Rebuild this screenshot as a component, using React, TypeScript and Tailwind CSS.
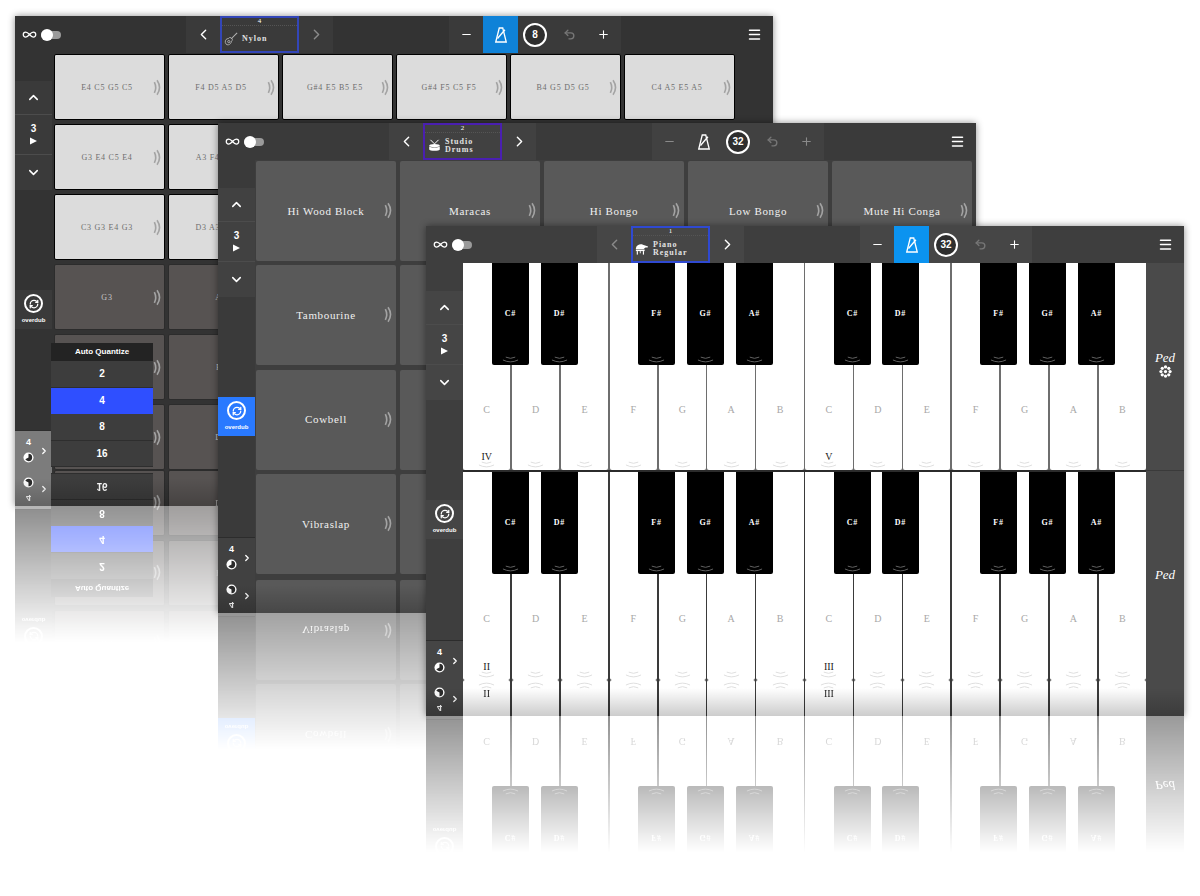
import { ReactNode } from 'react';
import { ChevronDown, ChevronLeft, ChevronRight, ChevronUp, Infinity as InfinityIcon, Menu, Minus, Plus, RefreshCw, Undo2 } from 'lucide-react';

interface Theme {
    bar: string;
    group: string;
    side: string;
    cell: string;
    main: string;
    box: string;
}

const darkTheme: Theme = { bar: 'bg-[#333333]', group: 'bg-[#3a3a3a]', side: 'bg-[#333333]', cell: 'bg-[#3a3a3a]', main: 'bg-[#333333]', box: 'border-[#3346b8]' };
const midTheme: Theme = { bar: 'bg-[#3a3a3a]', group: 'bg-[#414141]', side: 'bg-[#3a3a3a]', cell: 'bg-[#414141]', main: 'bg-[#3e3e3e]', box: 'border-[#4a1fb0]' };
const lightTheme: Theme = { bar: 'bg-[#3e3e3e]', group: 'bg-[#464646]', side: 'bg-[#3e3e3e]', cell: 'bg-[#454545]', main: 'bg-[#4a4a4a]', box: 'border-[#2f49d1]' };

interface FrameProps {
    theme: Theme;
    number: number;
    name: string[];
    icon: ReactNode;
    bpm: number;
    leftDim?: boolean;
    rightDim?: boolean;
    stepDim?: boolean;
    metronomeOn?: boolean;
    metronomeColor?: string;
    overdubOn?: boolean;
    modeLit?: boolean;
    children: ReactNode;
}

function GuitarIcon() {
    return (
        <svg viewBox="0 0 16 16" className="w-[14px] h-[14px]" fill="none" stroke="#b5b5b5" strokeWidth="1">
            <path d="M15 1 L8 8" strokeWidth="1.2" />
            <path d="M8 6.5 C6.5 6 5.5 6.5 5 7.5 C3 7.5 1 9 1.5 12 C2 14.5 4.5 15.5 6.5 14 C8 13 8.5 11.5 8.5 10.5 C9.5 10 10 9 9.5 8 Z" />
            <circle cx="5.5" cy="11" r="1.3" />
        </svg>
    );
}

function DrumIcon() {
    return (
        <svg viewBox="0 0 16 16" className="w-[13px] h-[13px]">
            <path d="M3 1 L8 6 L13 1" fill="none" stroke="#ffffff" strokeWidth="1.2" />
            <ellipse cx="8" cy="8" rx="6.5" ry="2" fill="#ffffff" />
            <path d="M1.5 9 V13 C1.5 15 14.5 15 14.5 13 V9 C14 11 2 11 1.5 9 Z" fill="#ffffff" />
        </svg>
    );
}

function PianoIcon() {
    return (
        <svg viewBox="0 0 16 16" className="w-[14px] h-[14px]" fill="#ffffff">
            <path d="M1 7 C2 3 6 2 9 3 L15 5 L14 6.5 C12 6 11 7 10 8 H1 Z" />
            <rect x="1" y="8.6" width="10" height="1.8" />
            <rect x="2" y="10.4" width="1.3" height="4" />
            <rect x="9" y="10.4" width="1.3" height="4" />
            <rect x="5.5" y="10.4" width="1" height="2.5" />
        </svg>
    );
}

function MetronomeIcon() {
    return (
        <svg viewBox="0 0 16 18" className="w-[14px] h-[16px]" fill="none" stroke="#ffffff" strokeWidth="1.5">
            <path d="M2 17 L6 1 H10 L14 17 Z" />
            <path d="M4 13 L12.5 3" />
        </svg>
    );
}

function SoundIcon() {
    return (
        <svg viewBox="0 0 10 18" className="w-[9px] h-[17px]" fill="none" stroke="#a3a3a3" strokeWidth="1.8">
            <path d="M1.5 3 Q4.5 9 1.5 15" />
            <path d="M4.5 1 Q10 9 4.5 17" />
        </svg>
    );
}

function ModeIcon() {
    return (
        <svg viewBox="0 0 12 12" className="w-[11px] h-[11px]">
            <circle cx="6" cy="6" r="5.5" fill="#ffffff" />
            <path d="M6 2 A4 4 0 0 1 6 10 A4 4 0 0 1 2.5 8 L6 6 Z" fill="#2b2b2b" />
        </svg>
    );
}

function Frame({ theme, number, name, icon, bpm, leftDim, rightDim, stepDim, metronomeOn, metronomeColor, overdubOn, modeLit, children }: FrameProps) {
    return (
        <div className={`relative flex flex-col w-[758px] h-[454px] ${theme.main}`}>
            {/* Top bar */}
            <div className={`flex h-[37px] shrink-0 ${theme.bar}`}>
                <div className="flex items-center w-[171px] pl-[7px] gap-[4px]">
                    <InfinityIcon size={15} color="#ffffff" strokeWidth={2} />
                    <div className="relative w-[20px] h-[8px] rounded-full bg-[#9a9a9a]">
                        <div className="absolute left-0 top-[-2px] w-[12px] h-[12px] rounded-full bg-white" />
                    </div>
                </div>
                <div className={`flex w-[147px] ${theme.group}`}>
                    <div className="flex items-center justify-center w-[34px]">
                        <ChevronLeft size={17} strokeWidth={2} color={leftDim ? '#8a8a8a' : '#ffffff'} />
                    </div>
                    <div className={`flex flex-col w-[79px] border-2 ${theme.box}`}>
                        <div className="h-[8px] border-b border-dotted border-[#555555] text-[7px] leading-[7px] text-center text-white">{number}</div>
                        <div className="flex flex-1 items-center pl-[2px] gap-[4px]">
                            <div className="flex justify-center w-[14px]">{icon}</div>
                            <div className="text-[8px] leading-[8px] font-bold tracking-[1px] text-[#e2e2e2]">
                                {name.map((line) => (
                                    <div key={line}>{line}</div>
                                ))}
                            </div>
                        </div>
                    </div>
                    <div className="flex items-center justify-center w-[34px]">
                        <ChevronRight size={17} strokeWidth={2} color={rightDim ? '#8a8a8a' : '#ffffff'} />
                    </div>
                </div>
                <div className="w-[116px]" />
                <div className={`flex w-[172px] ${theme.group}`}>
                    <div className="flex flex-1 items-center justify-center">
                        <Minus size={13} strokeWidth={2} color={stepDim ? '#8a8a8a' : '#ffffff'} />
                    </div>
                    <div className={`flex flex-1 items-center justify-center ${metronomeOn ? metronomeColor : ''}`}>
                        <MetronomeIcon />
                    </div>
                    <div className="flex flex-1 items-center justify-center">
                        <div className="flex items-center justify-center w-[24px] h-[24px] rounded-full border-2 border-white bg-[#2e2e2e] font-['Liberation_Sans',sans-serif] text-[10px] font-bold text-white">
                            {bpm}
                        </div>
                    </div>
                    <div className="flex flex-1 items-center justify-center">
                        <Undo2 size={13} strokeWidth={2.5} color="#777777" />
                    </div>
                    <div className="flex flex-1 items-center justify-center">
                        <Plus size={13} strokeWidth={2} color={stepDim ? '#8a8a8a' : '#ffffff'} />
                    </div>
                </div>
                <div className="flex-1" />
                <div className="flex items-center justify-center w-[37px]">
                    <Menu size={15} strokeWidth={2.4} color="#ffffff" />
                </div>
            </div>

            <div className="flex flex-1 min-h-0">
                {/* Left rail */}
                <div className={`flex flex-col w-[37px] shrink-0 font-['Liberation_Sans',sans-serif] text-white ${theme.side}`}>
                    <div className="h-[28px]" />
                    <div className={`flex flex-col h-[109px] ${theme.cell}`}>
                        <div className="flex items-center justify-center h-[34px] border-b border-[#4c4c4c]">
                            <ChevronUp size={15} strokeWidth={2.4} />
                        </div>
                        <div className="flex flex-col items-center justify-center h-[40px] border-b border-[#4c4c4c] gap-[3px]">
                            <span className="text-[10px] leading-[10px] font-bold">3</span>
                            <svg viewBox="0 0 8 8" className="w-[7px] h-[8px]" fill="#ffffff">
                                <path d="M0 0 L8 4 L0 8 Z" />
                            </svg>
                        </div>
                        <div className="flex flex-1 items-center justify-center">
                            <ChevronDown size={15} strokeWidth={2.4} />
                        </div>
                    </div>
                    <div className="h-[100px]" />
                    <div className={`flex flex-col items-center h-[39px] pt-[4px] ${overdubOn ? 'bg-[#2979ff]' : theme.cell}`}>
                        <div className="flex items-center justify-center w-[19px] h-[19px] rounded-full border-2 border-white">
                            <RefreshCw size={10} strokeWidth={3} />
                        </div>
                        <span className="mt-[3px] text-[6px] leading-[8px] font-bold">overdub</span>
                    </div>
                    <div className="flex-1" />
                    <div className={`flex items-center h-[40px] border-t border-[#2c2c2c] ${modeLit ? 'bg-[#7c7c7c]' : theme.cell}`}>
                        <div className="flex flex-col items-center w-[27px] gap-[5px]">
                            <span className="text-[9px] leading-[9px] font-bold">4</span>
                            <ModeIcon />
                        </div>
                        <ChevronRight size={10} strokeWidth={3} className="-ml-[3px]" />
                    </div>
                </div>

                <div className="flex-1 min-w-0">{children}</div>
            </div>
        </div>
    );
}

// Window with a mirrored copy fading out under it
function StudioWindow({ position, frame }: { position: string; frame: ReactNode }) {
    return (
        <section className={`absolute w-[758px] ${position}`}>
            <div className="absolute inset-x-0 top-0 h-[490px] shadow-[0_0_7px_rgba(0,0,0,0.45)]" />
            <div className="relative">{frame}</div>
            <div className="relative h-[180px] overflow-hidden bg-white" aria-hidden="true">
                <div className="h-[180px] overflow-hidden [mask-image:linear-gradient(to_bottom,#000_36px,rgba(0,0,0,0.56)_36px,rgba(0,0,0,0)_172px)]">
                    <div className="-scale-y-100">{frame}</div>
                </div>
                <div className="absolute inset-x-0 top-[8px] h-[28px] bg-gradient-to-b from-transparent to-black/20" />
            </div>
        </section>
    );
}

const padChords = [
    ['E4 C5 G5 C5', 'F4 D5 A5 D5', 'G#4 E5 B5 E5', 'G#4 F5 C5 F5', 'B4 G5 D5 G5', 'C4 A5 E5 A5'],
    ['G3 E4 C5 E4', 'A3 F4 D5 F4', '', '', '', ''],
    ['C3 G3 E4 G3', 'D3 A3 F4 A3', '', '', '', ''],
    ['G3', 'A3', '', '', '', ''],
    ['E3', 'F3', '', '', '', ''],
    ['C3', 'D3', '', '', '', ''],
];

function ChordGrid() {
    return (
        <div className="relative h-full pl-[2px] pt-px">
            <div className="grid grid-cols-[repeat(6,111px)] auto-rows-[66px] gap-x-[3px] gap-y-[4px]">
                {padChords.map((row, rowIdx) =>
                    row.map((chord, idx) => (
                        <div
                            key={`${rowIdx}-${idx}`}
                            className={
                                rowIdx < 3
                                    ? 'relative flex items-center justify-center rounded-[2px] border border-black bg-[#dcdcdc] text-[#6e6e6e]'
                                    : 'relative flex items-center justify-center rounded-[2px] border border-[#2c2c2c] bg-[#575352] text-[#c8c8c8]'
                            }
                        >
                            <span className="pt-px pr-[5px] text-[8px] tracking-[0.75px]">{chord}</span>
                            <div className="absolute right-[2px] top-[24px]">
                                <SoundIcon />
                            </div>
                        </div>
                    )),
                )}
            </div>
            {/* Auto Quantize popover */}
            <div className="absolute left-[-1px] top-[290px] w-[102px] font-['Liberation_Sans',sans-serif] font-bold text-white">
                <div className="flex items-center justify-center h-[18px] bg-[#232323] text-[8px]">Auto Quantize</div>
                {[2, 4, 8, 16].map((value) => (
                    <div
                        key={value}
                        className={
                            value === 4
                                ? 'flex items-center justify-center h-[26.5px] bg-[#2f4fff] text-[10px]'
                                : 'flex items-center justify-center h-[26.5px] border-b border-[#2e2e2e] bg-[#3d3d3d] text-[10px]'
                        }
                    >
                        {value}
                    </div>
                ))}
            </div>
        </div>
    );
}

const drumPads = [
    ['Hi Wood Block', 'Maracas', 'Hi Bongo', 'Low Bongo', 'Mute Hi Conga'],
    ['Tambourine', '', '', '', ''],
    ['Cowbell', '', '', '', ''],
    ['Vibraslap', '', '', '', ''],
];

function DrumGrid() {
    return (
        <div className="grid grid-cols-[repeat(5,140px)] auto-rows-[100px] gap-x-[4px] gap-y-[4.3px] pl-px pt-px">
            {drumPads.map((row, rowIdx) =>
                row.map((label, idx) => (
                    <div key={`${rowIdx}-${idx}`} className="relative flex items-center justify-center rounded-[2px] bg-[#595959] text-[#f0f0f0]">
                        <span className="text-[11px] tracking-[0.65px]">{label}</span>
                        <div className="absolute right-[3px] top-[41px]">
                            <SoundIcon />
                        </div>
                    </div>
                )),
            )}
        </div>
    );
}

const whiteKeys = ['C', 'D', 'E', 'F', 'G', 'A', 'B', 'C', 'D', 'E', 'F', 'G', 'A', 'B'];
const blackKeys = [
    { label: 'C#', left: 29 },
    { label: 'D#', left: 78 },
    { label: 'F#', left: 175 },
    { label: 'G#', left: 224 },
    { label: 'A#', left: 273 },
    { label: 'C#', left: 371 },
    { label: 'D#', left: 419 },
    { label: 'F#', left: 517 },
    { label: 'G#', left: 566 },
    { label: 'A#', left: 615 },
];

function KeyArcs({ color }: { color: string }) {
    return (
        <svg viewBox="0 0 18 7" className="w-[17px] h-[7px]" fill="none" stroke={color} strokeWidth="1">
            <path d="M4 1 Q9 3.5 14 1" />
            <path d="M1 4 Q9 8 17 4" />
        </svg>
    );
}

function Keyboard({ first, second, height, lines }: { first: string; second: string; height: string; lines: string }) {
    return (
        <div className={`relative flex gap-[1.5px] ${height} ${lines}`}>
            {whiteKeys.map((note, idx) => (
                <div key={idx} className="relative flex flex-1 flex-col items-center rounded-b-[2px] bg-white">
                    <span className="mt-[139px] text-[10px] text-[#a8a8a8]">{note}</span>
                    <div className="mt-auto mb-[2px] flex flex-col items-center">
                        {idx === 0 && <span className="absolute bottom-[6px] text-[10px] text-[#222222]">{first}</span>}
                        {idx === 7 && <span className="absolute bottom-[6px] text-[10px] text-[#222222]">{second}</span>}
                        <KeyArcs color="#dddddd" />
                    </div>
                </div>
            ))}
            {blackKeys.map((key, idx) => (
                <div
                    key={idx}
                    className="absolute top-0 flex flex-col items-center w-[37px] h-[102px] rounded-b-[2px] bg-black text-white"
                    style={{ left: key.left }}
                >
                    <span className="mt-[45px] text-[8px] font-bold tracking-[0.8px]">{key.label}</span>
                    <div className="mt-auto mb-[2px]">
                        <KeyArcs color="#666666" />
                    </div>
                </div>
            ))}
        </div>
    );
}

function PianoPane() {
    return (
        <div className="flex h-full">
            <div className="flex flex-col w-[683px] gap-[2px] bg-[#2b2b2b]">
                <Keyboard first="IV" second="V" height="h-[207px]" lines="bg-[#6e6e6e]" />
                <Keyboard first="II" second="III" height="h-[208px]" lines="bg-[#3a3a3a]" />
            </div>
            <div className="flex flex-col flex-1 text-white">
                <div className="flex flex-col items-center h-[208px] pt-[88px] border-b border-[#3a3a3a]">
                    <span className="text-[13px] leading-[13px] italic">Ped</span>
                    <svg viewBox="0 0 12 12" className="mt-[1px] w-[13px] h-[13px]" fill="#ffffff">
                        <circle cx="6" cy="1.8" r="1.5" />
                        <circle cx="6" cy="10.2" r="1.5" />
                        <circle cx="1.8" cy="6" r="1.5" />
                        <circle cx="10.2" cy="6" r="1.5" />
                        <circle cx="3" cy="3" r="1.5" />
                        <circle cx="9" cy="3" r="1.5" />
                        <circle cx="3" cy="9" r="1.5" />
                        <circle cx="9" cy="9" r="1.5" />
                        <circle cx="6" cy="6" r="1.5" />
                    </svg>
                </div>
                <div className="flex justify-center pt-[97px]">
                    <span className="text-[13px] leading-[13px] italic">Ped</span>
                </div>
            </div>
        </div>
    );
}

export default function App() {
    return (
        <div className="relative w-[1200px] h-[896px] overflow-hidden bg-white font-['Liberation_Serif',serif]">
            <StudioWindow
                position="left-[15px] top-[16px]"
                frame={
                    <Frame
                        theme={darkTheme}
                        number={4}
                        name={['Nylon']}
                        icon={<GuitarIcon />}
                        bpm={8}
                        rightDim
                        metronomeOn
                        metronomeColor="bg-[#0f82d8]"
                        modeLit
                    >
                        <ChordGrid />
                    </Frame>
                }
            />
            <StudioWindow
                position="left-[218px] top-[123px]"
                frame={
                    <Frame theme={midTheme} number={2} name={['Studio', 'Drums']} icon={<DrumIcon />} bpm={32} stepDim overdubOn>
                        <DrumGrid />
                    </Frame>
                }
            />
            <StudioWindow
                position="left-[426px] top-[226px]"
                frame={
                    <Frame
                        theme={lightTheme}
                        number={1}
                        name={['Piano', 'Regular']}
                        icon={<PianoIcon />}
                        bpm={32}
                        leftDim
                        metronomeOn
                        metronomeColor="bg-[#0b93f0]"
                    >
                        <PianoPane />
                    </Frame>
                }
            />
        </div>
    );
}
